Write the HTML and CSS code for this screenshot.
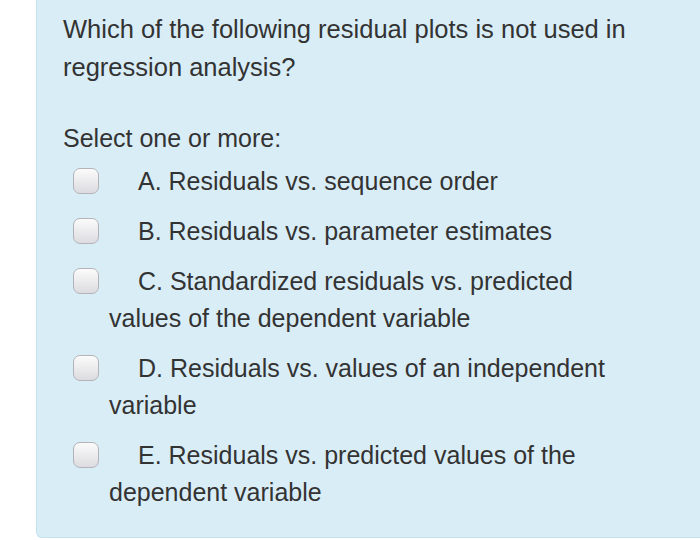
FILE: index.html
```html
<!DOCTYPE html>
<html>
<head>
<meta charset="utf-8">
<link rel="stylesheet" href="styles.css">
</head>
<body>
<div class="panel">
  <div class="qtext">Which of the following residual plots is not used in regression analysis?</div>
  <div class="prompt">Select one or more:</div>
  <div class="answers">
    <div class="opt"><span class="box"></span>A. Residuals vs. sequence order</div>
    <div class="opt"><span class="box"></span>B. Residuals vs. parameter estimates</div>
    <div class="opt"><span class="box"></span>C. Standardized residuals vs. predicted values of the dependent variable</div>
    <div class="opt"><span class="box"></span>D. Residuals vs. values of an independent variable</div>
    <div class="opt"><span class="box"></span>E. Residuals vs. predicted values of the dependent variable</div>
  </div>
</div>
</body>
</html>
```
FILE: styles.css
```css
html, body {
  margin: 0;
  padding: 0;
  background: #ffffff;
}
body {
  width: 700px;
  height: 540px;
  overflow: hidden;
  font-family: "Liberation Sans", Arial, sans-serif;
  color: #333333;
}
.panel {
  margin-left: 36px;
  width: 664px;
  height: 538px;
  box-sizing: border-box;
  background: #d9edf7;
  border: 1px solid #c6e2ee;
  border-top: none;
  border-right: none;
  border-radius: 0 0 0 6px;
  padding: 10px 0 0 26px;
  font-size: 25px;
  line-height: 38px;
}
.qtext {
  width: 580px;
  font-size: 25.5px;
}
.prompt {
  margin-top: 33px;
}
.answers {
  margin-top: 6px;
  padding-left: 46px;
  line-height: 37px;
}
.opt {
  width: 542px;
  margin-bottom: 13px;
}
.box {
  display: inline-block;
  width: 26px;
  height: 26px;
  box-sizing: border-box;
  margin-left: -36px;
  margin-right: 39px;
  vertical-align: -4px;
  border: 1px solid #b4b4b8;
  border-radius: 7px;
  background: linear-gradient(#fbfbfb, #dcdce0);
}
```
